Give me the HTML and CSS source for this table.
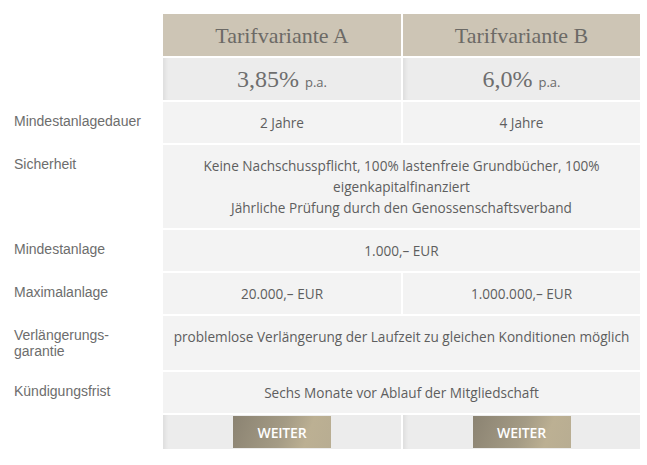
FILE: index.html
```html
<!DOCTYPE html>
<html lang="de">
<head>
<meta charset="utf-8">
<title>Tarifvarianten</title>
<link rel="stylesheet" href="styles.css">
</head>
<body>
<div class="compare">
  <div class="label empty"></div>
  <div class="head">Tarifvariante A</div>
  <div class="head">Tarifvariante B</div>

  <div class="label empty"></div>
  <div class="rate">3,85% <span class="pa">p.a.</span></div>
  <div class="rate">6,0% <span class="pa">p.a.</span></div>

  <div class="label">Mindestanlagedauer</div>
  <div class="cell">2 Jahre</div>
  <div class="cell">4 Jahre</div>

  <div class="label">Sicherheit</div>
  <div class="cell span">Keine Nachschusspflicht, 100% lastenfreie Grundbücher, 100% eigenkapitalfinanziert<br>Jährliche Prüfung durch den Genossenschaftsverband</div>

  <div class="label">Mindestanlage</div>
  <div class="cell span">1.000,– EUR</div>

  <div class="label">Maximalanlage</div>
  <div class="cell">20.000,– EUR</div>
  <div class="cell">1.000.000,– EUR</div>

  <div class="label">Verlängerungs-<br>garantie</div>
  <div class="cell span">problemlose Verlängerung der Laufzeit zu gleichen Konditionen möglich</div>

  <div class="label">Kündigungsfrist</div>
  <div class="cell span">Sechs Monate vor Ablauf der Mitgliedschaft</div>

  <div class="label empty"></div>
  <div class="action"><a class="btn" href="#">WEITER</a></div>
  <div class="action"><a class="btn" href="#">WEITER</a></div>
</div>
</body>
</html>
```

FILE: styles.css
```css
html, body {
  margin: 0;
  padding: 0;
  background: #ffffff;
}

body {
  padding: 14px 0 0 8px;
}

.compare {
  display: grid;
  grid-template-columns: 153px 238px 237px;
  gap: 2px;
  font-family: "Open Sans", "Noto Sans", sans-serif;
  font-size: 13.6px;
  color: #5e5e5e;
}

.label {
  font-family: "Liberation Sans", Arial, sans-serif;
  font-size: 14px;
  line-height: 16px;
  color: #6d6d6d;
  padding: 11px 6px;
}

.head {
  background: #cdc5b5;
  height: 42px;
  display: flex;
  align-items: center;
  justify-content: center;
  font-family: "Liberation Serif", "Times New Roman", serif;
  font-size: 22px;
  color: #6c6a66;
  padding-top: 1px;
  box-sizing: border-box;
}

.rate {
  background: #ececec;
  height: 42px;
  display: flex;
  align-items: center;
  justify-content: center;
  font-family: "Liberation Serif", "Times New Roman", serif;
  font-size: 24px;
  color: #6e6e6e;
  box-shadow: inset 5px 0 4px -3px rgba(0, 0, 0, 0.07);
  white-space: pre;
}

.pa {
  font-family: "Open Sans", "Noto Sans", sans-serif;
  font-size: 13px;
  color: #6a6a6a;
  padding-top: 6px;
}

.cell {
  background: #f3f3f3;
  text-align: center;
  line-height: 21px;
  padding: 10px 8px;
}

.span {
  grid-column: span 2;
}

.action {
  background: #ececec;
  box-shadow: inset 5px 0 4px -3px rgba(0, 0, 0, 0.07);
  display: flex;
  justify-content: center;
  padding: 1px 0;
  height: 34px;
  box-sizing: border-box;
}

.btn {
  display: flex;
  align-items: center;
  justify-content: center;
  width: 98px;
  height: 32px;
  background: linear-gradient(110deg, #8b8372 0%, #a49b85 50%, #bcb093 75%, #b8ad92 100%);
  color: #ffffff;
  font-family: "Open Sans", "Noto Sans", sans-serif;
  font-size: 14px;
  font-weight: 600;
  text-decoration: none;
  letter-spacing: -0.2px;
}
```
